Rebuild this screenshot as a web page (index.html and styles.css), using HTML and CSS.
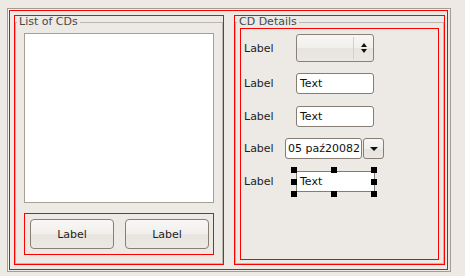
FILE: index.html
```html
<!DOCTYPE html>
<html lang="pl">
<head>
    <meta charset="UTF-8">
    <title>CD Form</title>
    <link rel="stylesheet" href="styles.css">
</head>
<body>
    <div class="frame">
        <div class="outer_box">
            <div class="group_box left_group">
                <fieldset class="group">
                    <legend>List of CDs</legend>
                    <div class="list_pane">
                        <div class="cd_list"></div>
                        <div class="button_box">
                            <button class="push_button">Label</button>
                            <button class="push_button">Label</button>
                        </div>
                    </div>
                </fieldset>
            </div>
            <div class="group_box right_group">
                <fieldset class="group">
                    <legend>CD Details</legend>
                    <div class="details_pane">
                        <div class="form_box">
                            <div class="form_row row_combo">
                                <span class="form_label">Label</span>
                                <div class="combo">
                                    <span class="combo_sep"></span>
                                    <span class="spin_arrows">
                                        <span class="arrow_up"></span>
                                        <span class="arrow_down"></span>
                                    </span>
                                </div>
                            </div>
                            <div class="form_row">
                                <span class="form_label">Label</span>
                                <div class="line_edit">Text</div>
                            </div>
                            <div class="form_row row_gap">
                                <span class="form_label">Label</span>
                                <div class="line_edit">Text</div>
                            </div>
                            <div class="form_row">
                                <span class="form_label short">Label</span>
                                <div class="date_edit">05 paź20082</div>
                                <div class="drop_button"><span class="arrow_drop"></span></div>
                            </div>
                            <div class="form_row row_gap">
                                <span class="form_label">Label</span>
                                <div class="selected">
                                    <div class="line_edit square">Text</div>
                                    <span class="handle h_tl"></span>
                                    <span class="handle h_tm"></span>
                                    <span class="handle h_tr"></span>
                                    <span class="handle h_ml"></span>
                                    <span class="handle h_mr"></span>
                                    <span class="handle h_bl"></span>
                                    <span class="handle h_bm"></span>
                                    <span class="handle h_br"></span>
                                </div>
                            </div>
                        </div>
                    </div>
                </fieldset>
            </div>
        </div>
    </div>
</body>
</html>
```

FILE: styles.css
```css
* {
    box-sizing: border-box;
}
html, body {
    margin: 0;
    background: #edeae5;
    font-family: "DejaVu Sans", "Liberation Sans", sans-serif;
    font-size: 11px;
    color: #1e1e1e;
}
body {
    width: 465px;
    height: 276px;
    overflow: hidden;
}
.frame {
    margin: 8px 0 0 7px;
    width: 444px;
    height: 264px;
    padding: 1px;
    border: 1px solid #a59d93;
    box-shadow: inset 1px 1px #f8f6f3;
}
.outer_box {
    display: flex;
    gap: 10px;
    width: 439px;
    height: 260px;
    padding: 4px 2px 4px 4px;
    border: 1px solid #ff0000;
}
.group_box {
    height: 250px;
    border: 1px solid #ff0000;
}
.left_group {
    width: 210px;
}
.right_group {
    width: 211px;
}
.group {
    margin: 0;
    padding: 0;
    height: 100%;
    border: 1px solid #bcb7b0;
    min-width: 0;
}
.group legend {
    margin-left: 1px;
    padding: 0 2px;
    line-height: 12px;
    color: #474747;
}
.list_pane {
    display: flex;
    flex-direction: column;
    gap: 10px;
    padding: 5px 8px 8px;
}
.cd_list {
    height: 170px;
    background: white;
    border: 1px solid #a89f94;
}
.button_box {
    display: flex;
    gap: 11px;
    height: 42px;
    padding: 5px 4px 5px 5px;
    border: 1px solid #ff0000;
}
.push_button {
    width: 84px;
    height: 30px;
    padding: 0;
    font: inherit;
    color: #1e1e1e;
    border: 1px solid #877e74;
    border-radius: 4px;
    background: linear-gradient(#f8f7f5, #f1efec 50%, #e8e5e0 52%, #ece9e5);
}
.details_pane {
    padding: 0 4px 3px;
}
.form_box {
    display: flex;
    flex-direction: column;
    gap: 11px;
    height: 232px;
    padding: 5px 3px;
    border: 1px solid #ff0000;
}
.form_row {
    display: flex;
    align-items: center;
    height: 21px;
}
.row_combo {
    height: 28px;
}
.row_gap {
    margin-top: 1px;
}
.form_label {
    width: 52px;
    flex: none;
}
.form_label.short {
    width: 41px;
}
.combo {
    position: relative;
    width: 78px;
    height: 28px;
    border: 1px solid #8a8177;
    border-radius: 3px;
    background: linear-gradient(#f7f6f4, #f2f0ed 48%, #e8e5e0 52%, #ebe8e4);
    display: flex;
    justify-content: flex-end;
    align-items: center;
}
.combo_sep {
    width: 1px;
    height: 22px;
    background: #d4cfc8;
    margin-right: 19px;
}
.spin_arrows {
    position: absolute;
    right: 6px;
    top: 8px;
    display: flex;
    flex-direction: column;
    gap: 2px;
}
.arrow_up, .arrow_down {
    width: 0;
    height: 0;
    border-left: 3px solid transparent;
    border-right: 3px solid transparent;
}
.arrow_up {
    border-bottom: 4px solid #111;
}
.arrow_down {
    border-top: 4px solid #111;
}
.line_edit {
    width: 78px;
    height: 21px;
    padding: 2px 0 0 3px;
    background: white;
    border: 1px solid #857c72;
    border-radius: 3px;
    color: #111;
    line-height: 15px;
}
.line_edit.square {
    width: 79px;
    border-radius: 0;
}
.date_edit {
    width: 77px;
    height: 21px;
    padding: 2px 0 0 2px;
    background: white;
    border: 1px solid #857c72;
    border-radius: 3px;
    line-height: 15px;
    white-space: nowrap;
    overflow: hidden;
    color: #111;
}
.drop_button {
    width: 21px;
    height: 21px;
    margin-left: 1px;
    border: 1px solid #877e74;
    border-radius: 3px;
    background: linear-gradient(#f8f7f5, #f0eeeb 50%, #e7e4df 52%, #ebe8e4);
    display: flex;
    justify-content: center;
    align-items: center;
}
.arrow_drop {
    width: 0;
    height: 0;
    border-left: 4px solid transparent;
    border-right: 4px solid transparent;
    border-top: 4px solid #111;
}
.selected {
    position: relative;
}
.handle {
    position: absolute;
    width: 6px;
    height: 6px;
    background: #000;
}
.h_tl, .h_ml, .h_bl {
    left: -5px;
}
.h_tm, .h_bm {
    left: 35px;
}
.h_tr, .h_mr, .h_br {
    left: 75px;
}
.h_tl, .h_tm, .h_tr {
    top: -4px;
}
.h_ml, .h_mr {
    top: 8px;
}
.h_bl, .h_bm, .h_br {
    top: 20px;
}
```
